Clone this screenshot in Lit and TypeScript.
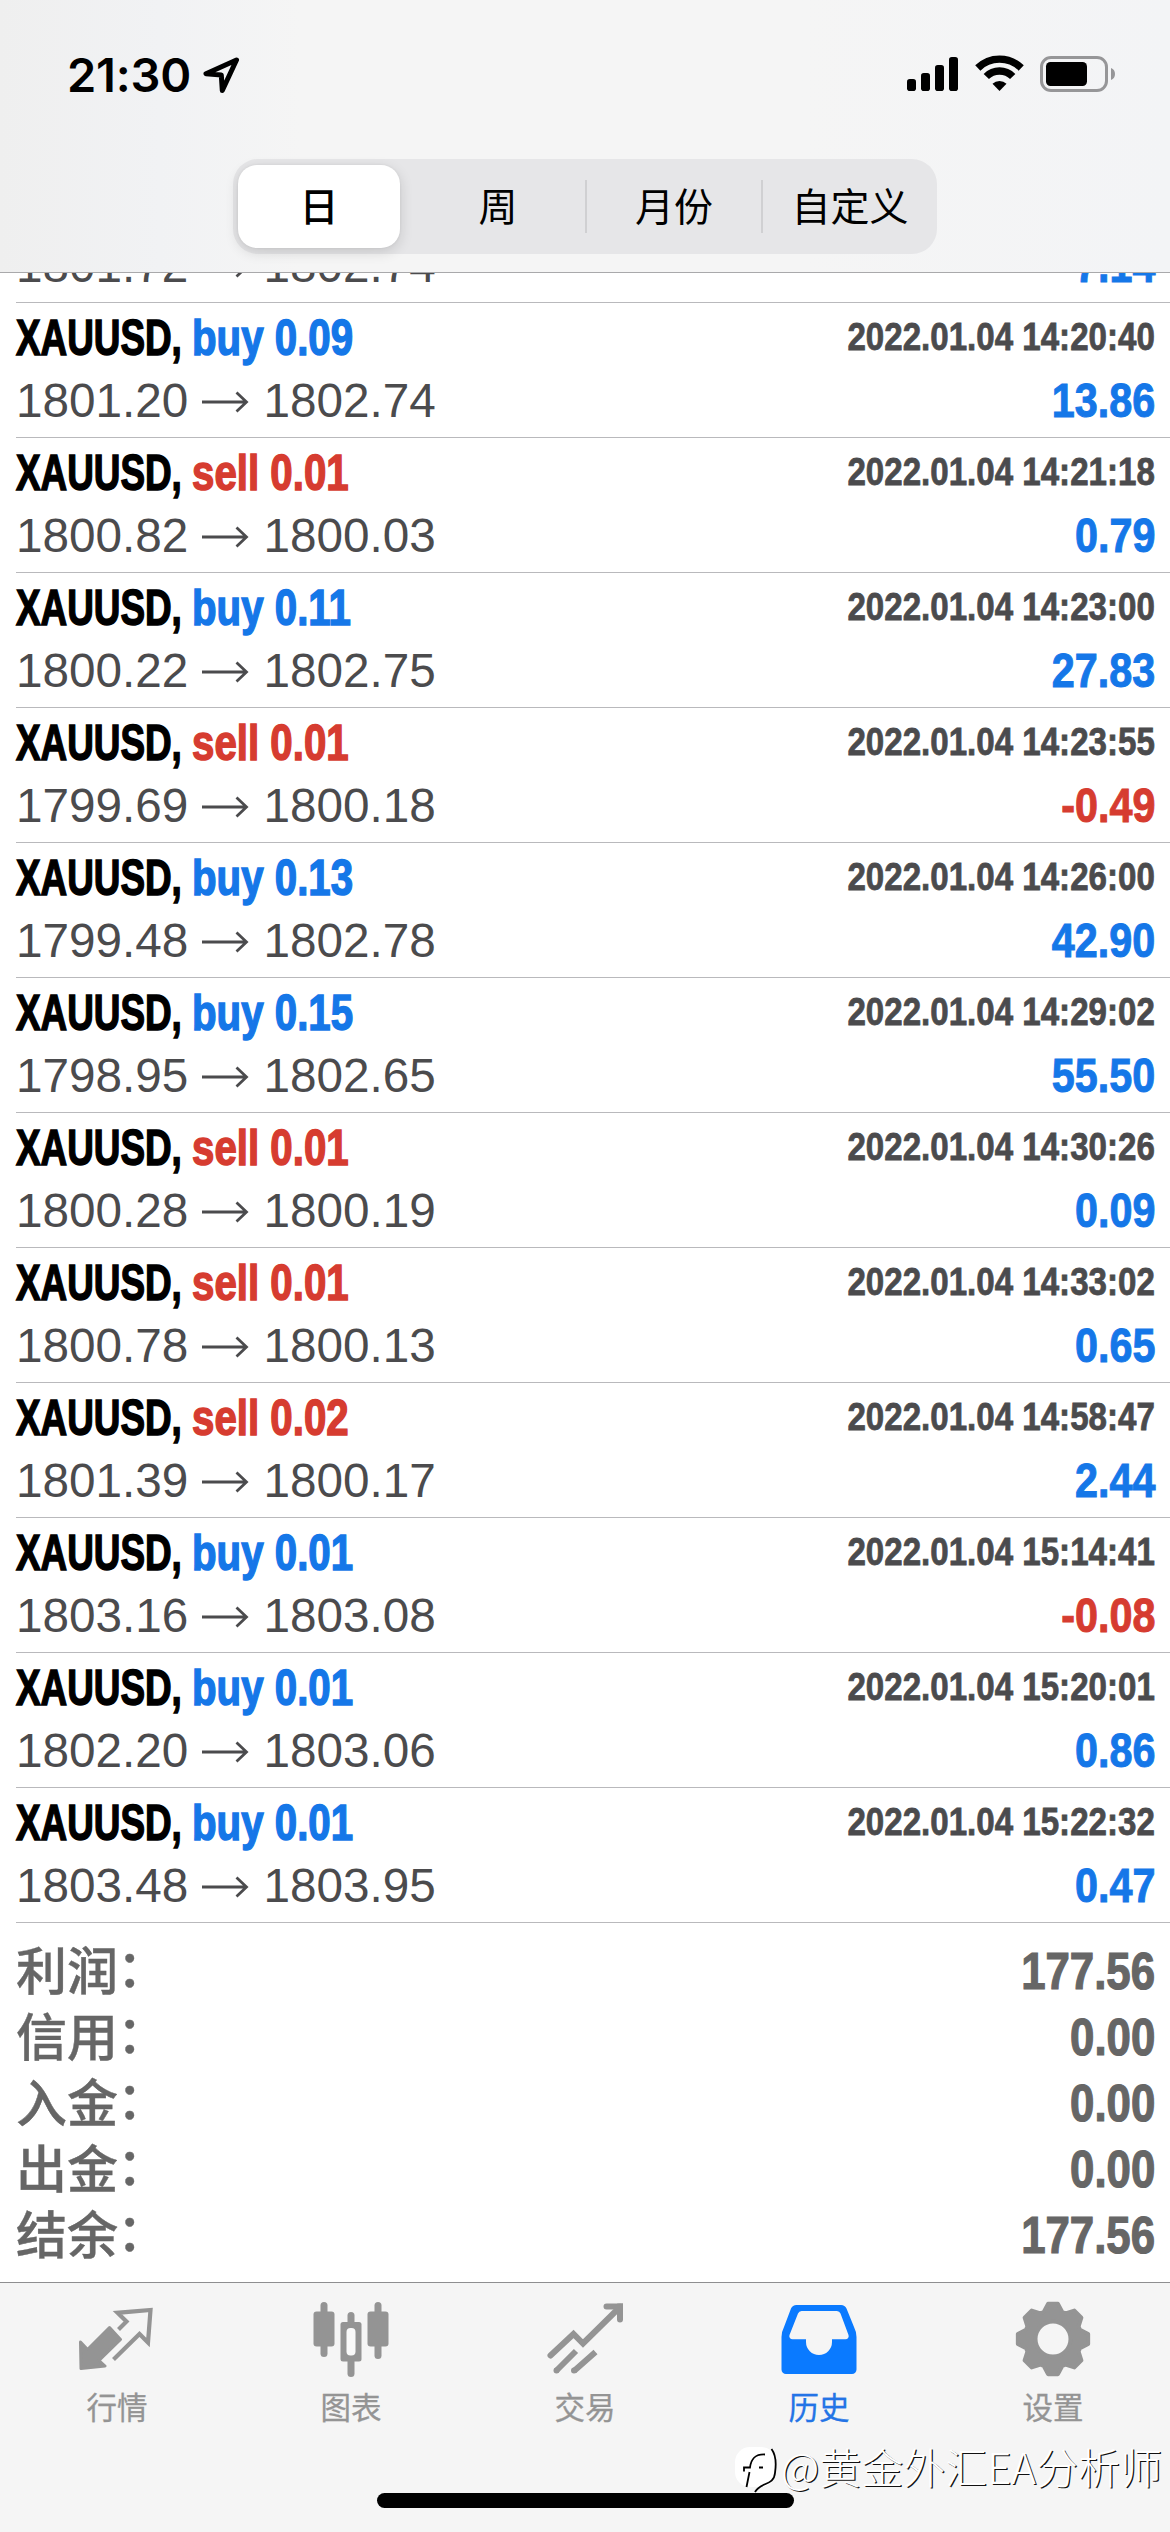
import { LitElement, html, svg, css, nothing } from "lit";
import { customElement } from "lit/decorators.js";
import { classMap } from "lit/directives/class-map.js";

type Side = "buy" | "sell";

interface Deal {
  side?: Side;
  volume?: string;
  open: string;
  close: string;
  time?: string;
  profit: string;
}

const deal = (side: Side, volume: string, open: string, close: string, time: string, profit: string): Deal => ({
  side, volume, open, close, time: `2022.01.04 ${time}`, profit,
});

// The first entry is scrolled half under the header, so only its price line is visible.
const DEALS: Deal[] = [
  { open: "1801.72", close: "1802.74", profit: "7.14" },
  deal("buy", "0.09", "1801.20", "1802.74", "14:20:40", "13.86"),
  deal("sell", "0.01", "1800.82", "1800.03", "14:21:18", "0.79"),
  deal("buy", "0.11", "1800.22", "1802.75", "14:23:00", "27.83"),
  deal("sell", "0.01", "1799.69", "1800.18", "14:23:55", "-0.49"),
  deal("buy", "0.13", "1799.48", "1802.78", "14:26:00", "42.90"),
  deal("buy", "0.15", "1798.95", "1802.65", "14:29:02", "55.50"),
  deal("sell", "0.01", "1800.28", "1800.19", "14:30:26", "0.09"),
  deal("sell", "0.01", "1800.78", "1800.13", "14:33:02", "0.65"),
  deal("sell", "0.02", "1801.39", "1800.17", "14:58:47", "2.44"),
  deal("buy", "0.01", "1803.16", "1803.08", "15:14:41", "-0.08"),
  deal("buy", "0.01", "1802.20", "1803.06", "15:20:01", "0.86"),
  deal("buy", "0.01", "1803.48", "1803.95", "15:22:32", "0.47"),
];

const TOTALS: [string, string][] = [
  ["利润", "177.56"],
  ["信用", "0.00"],
  ["入金", "0.00"],
  ["出金", "0.00"],
  ["结余", "177.56"],
];

const gearPath = (): string => {
  const pts: string[] = [];
  for (let i = 0; i < 8; i++) {
    const a = (i * Math.PI) / 4 - Math.PI / 2;
    for (const [r, d] of [[28.5, -0.33], [35.5, -0.14], [35.5, 0.14], [28.5, 0.33]]) {
      pts.push(`${(38 + r * Math.cos(a + d)).toFixed(2)} ${(38 + r * Math.sin(a + d)).toFixed(2)}`);
    }
  }
  return `M${pts.join("L")}Z M38 20.5a17.5 17.5 0 1 0 0 35a17.5 17.5 0 1 0 0-35Z`;
};

const ICONS = {
  quotes: svg`
    <path fill="currentColor" stroke="currentColor" stroke-width="3" stroke-linejoin="round"
      d="M1.500 41 8.500 48.500 30.500 26.500 41.500 38.500 20 59.500 26 65 2 67.500Z"/>
    <path fill="none" stroke="currentColor" stroke-width="4.200" d="M39.500 28.500 47.500 20.500 38.500 11.800 71.500 9 69 41.500 60.500 33 34.500 58.500"/>`,
  chart: svg`
    <g fill="currentColor">
      <rect x="7.500" y="1" width="7" height="55" rx="3.500"/><rect x="0.500" y="10.500" width="21" height="35" rx="3"/>
      <rect x="61.500" y="1" width="7" height="57" rx="3.500"/><rect x="54.500" y="10.500" width="21" height="35" rx="3"/>
      <rect x="34.500" y="11" width="7" height="65" rx="3.500"/>
      <rect x="27.500" y="21" width="21" height="39.500" rx="2.500"/>
    </g>
    <rect x="33.500" y="27" width="9" height="27.500" rx="4" fill="#f9f9f9"/>`,
  trade: svg`
    <g fill="none" stroke="currentColor" stroke-width="6" stroke-linejoin="miter">
      <path stroke-linecap="round" d="M3.500 54.500 26.500 33 36 42.500 73 6"/>
      <path stroke-linecap="round" d="M59.500 5.500H73V18.500"/>
      <path d="M29 50 9 70M48.500 51 27 70"/>
    </g>
    <path fill="currentColor" d="M70 2.500h6v6z"/>
    <circle cx="9.500" cy="69.500" r="3" fill="currentColor"/><circle cx="27" cy="69.500" r="3" fill="currentColor"/>`,
  history: svg`
    <path fill="currentColor" fill-rule="evenodd" transform="translate(0,-1)" d="M15.500 5H60a6 6 0 0 1 5.500 3.500L73 27a22 22 0 0 1 2.500 10V69.500a4.500 4.500 0 0 1-4.500 4.500H5a4.500 4.500 0 0 1-4.500-4.500V37A22 22 0 0 1 3 27L10 8.500A6 6 0 0 1 15.500 5Z
      M21 11a4 4 0 0 0-4 2.500L8.500 35a3.200 3.200 0 0 0 3 4.300H25V42a13 13 0 0 0 26 0V39.300H64.500a3.200 3.200 0 0 0 3-4.300L59.500 13.500a4 4 0 0 0-4-2.500Z"/>`,
  settings: svg`
    <path fill="currentColor" fill-rule="evenodd" stroke="currentColor" stroke-width="4" stroke-linejoin="round" d=${gearPath()}/>`,
};

const TABS: { id: keyof typeof ICONS; label: string }[] = [
  { id: "quotes", label: "行情" },
  { id: "chart", label: "图表" },
  { id: "trade", label: "交易" },
  { id: "history", label: "历史" },
  { id: "settings", label: "设置" },
];

@customElement("status-bar")
class StatusBar extends LitElement {
  static styles = css`
    :host { display: flex; justify-content: space-between; align-items: flex-start; height: 159px; padding: 0 54px 0 67px; box-sizing: border-box; color: #000; }
    .left { display: flex; padding-top: 46px; }
    .clock { width: 136px; font: 600 47px/57px Inter, "Liberation Sans", sans-serif; white-space: nowrap; letter-spacing: -0.2px; }
    .loc { margin-top: 10px; }
    .right { display: flex; padding-top: 54px; }
    .wifi { margin-left: 16px; }
    .battery { margin-left: 16px; }
    svg { display: block; }
  `;
  render() {
    return html`
      <div class="left">
        <span class="clock">21:30</span>
        <svg class="loc" width="37" height="38" viewBox="0 0 37 38" fill="none" stroke="#000" stroke-width="5" stroke-linejoin="round">
          <path d="M33.500 4 3 17.800 18.300 19 19.300 34.500Z"/>
        </svg>
      </div>
      <div class="right">
        <svg width="52" height="38" viewBox="0 0 52 38">
          <rect x="0" y="25" width="9" height="12" rx="2.800"/><rect x="14" y="19" width="9" height="18" rx="2.800"/>
          <rect x="28" y="11" width="9" height="26" rx="2.800"/><rect x="42" y="3" width="9" height="34" rx="2.800"/>
        </svg>
        <svg class="wifi" width="49" height="38" viewBox="0 0 49 38">
          <g fill="none" stroke="#000" stroke-width="7.400">
            <path d="M2.800 14A31 31 0 0 1 46.200 14"/><path d="M11.300 22.500A18.500 18.500 0 0 1 37.700 22.500"/>
          </g>
          <path d="M24.500 37 17.500 29.800A10 10 0 0 1 31.500 29.800Z"/>
        </svg>
        <svg class="battery" width="76" height="40" viewBox="0 0 76 40">
          <rect x="1.500" y="3.500" width="65" height="33" rx="9.500" fill="none" stroke="#969698" stroke-width="3"/>
          <rect x="6" y="8" width="41" height="24" rx="4.500"/>
          <path d="M71 14a6.500 6.500 0 0 1 0 12Z" fill="#969698"/>
        </svg>
      </div>`;
  }
}

@customElement("period-switch")
class PeriodSwitch extends LitElement {
  static styles = css`
    :host { display: grid; grid-template-columns: repeat(4, 176px); width: 704px; height: 95px; border-radius: 25px; background: #e6e6e8; }
    .seg { display: flex; align-items: center; justify-content: center; font: 400 39px/54px "Noto Sans CJK SC", sans-serif; color: #000; margin: 21px 0; border-left: 2px solid transparent; white-space: nowrap; }
    .seg span { margin-top: -6px; }
    .line { border-left-color: #d0d0d2; }
    .on { margin: 6px 9px 6px 5px; border: 0; border-radius: 19px; background: #fff; box-shadow: 0 4px 14px rgba(0, 0, 0, .14), 0 0 3px rgba(0, 0, 0, .06); font-weight: 500; }
  `;
  render() {
    return html`${["日", "周", "月份", "自定义"].map(
      (t, i) => html`<div class=${classMap({ seg: true, on: i === 0, line: i > 1 })}><span>${t}</span></div>`
    )}`;
  }
}

@customElement("deal-row")
class DealRow extends LitElement {
  static properties = { deal: { attribute: false } };
  declare deal: Deal;
  static styles = css`
    :host { display: block; height: 134px; margin-left: 16px; padding-right: 15px; border-bottom: 1px solid #b9b9bc; font-family: "Liberation Sans", Arial, sans-serif; white-space: nowrap; }
    .top { display: flex; height: 70px; padding-top: 5px; box-sizing: border-box; }
    .symbol, .action { font-weight: 700; font-size: 50px; line-height: 60px; transform-origin: 0 50%; -webkit-text-stroke: 1.500px currentColor; }
    .symbol { width: 176px; transform: scaleX(.737); color: #000; }
    .action { transform: scaleX(.805); }
    .time { margin-left: auto; font-weight: 700; font-size: 39.500px; line-height: 56px; color: #4b4b4d; transform: scaleX(.838); transform-origin: 100% 50%; -webkit-text-stroke: .8px currentColor; }
    .bottom { display: flex; justify-content: space-between; height: 64px; line-height: 55px; }
    .prices { display: flex; align-items: center; height: 55px; font-size: 47.700px; color: #4b4b4d; }
    .arrow { margin: 2px 13.500px 0; display: block; }
    .profit { font-weight: 700; font-size: 48px; transform: scaleX(.86); transform-origin: 100% 50%; -webkit-text-stroke: 1px currentColor; }
    .blue { color: #1577e8; }
    .red { color: #d63c30; }
  `;
  render() {
    const d = this.deal;
    const loss = d.profit.startsWith("-");
    return html`
      <div class="top">
        ${d.side
          ? html`<span class="symbol">XAUUSD,</span>
              <span class=${classMap({ action: true, blue: d.side === "buy", red: d.side === "sell" })}>${d.side} ${d.volume}</span>
              <span class="time">${d.time}</span>`
          : nothing}
      </div>
      <div class="bottom">
        <div class="prices">
          <span>${d.open}</span>
          <svg class="arrow" width="48" height="22" viewBox="0 0 48 22" fill="none" stroke="currentColor" stroke-width="2.800">
            <path d="M0 11H44M34.500 1.500 44.500 11 34.500 20.500"/>
          </svg>
          <span>${d.close}</span>
        </div>
        <span class=${classMap({ profit: true, blue: !loss, red: loss })}>${d.profit}</span>
      </div>`;
  }
}

@customElement("totals-list")
class TotalsList extends LitElement {
  static styles = css`
    :host { display: block; padding: 15px 15px 14px 16px; color: #666; white-space: nowrap; }
    .row { display: flex; justify-content: space-between; height: 66px; }
    .label { display: flex; font: 500 51px/60px "Noto Sans CJK SC", sans-serif; -webkit-text-stroke: .4px currentColor; }
    .colon { transform: translate(-1px, -3px); }
    .value { font: 700 51px/68px "Liberation Sans", Arial, sans-serif; transform: scaleX(.858); transform-origin: 100% 50%; -webkit-text-stroke: 1.200px currentColor; }
  `;
  render() {
    return html`${TOTALS.map(
      ([k, v]) => html`<div class="row">
        <div class="label"><span>${k}</span><span class="colon">：</span></div>
        <span class="value">${v}</span>
      </div>`
    )}`;
  }
}

@customElement("tab-bar")
class TabBar extends LitElement {
  static styles = css`
    :host { display: block; height: 250px; box-sizing: border-box; border-top: 1px solid #8e8e90; background: #f5f5f5; }
    .tabs { display: grid; grid-template-columns: repeat(5, 1fr); height: 210px; }
    .tab { display: flex; flex-direction: column; align-items: center; padding-top: 18px; color: #949494; }
    .tab svg { display: block; }
    .tab span { font: 400 30.500px/44px "Noto Sans CJK SC", sans-serif; margin-top: 6px; -webkit-text-stroke: .3px currentColor; }
    .on { color: #0a7aff; }
    .on span { color: #2474e6; }
    .home { width: 417px; height: 15px; border-radius: 8px; background: #000; margin: 0 auto; }
  `;
  render() {
    return html`
      <div class="tabs">
        ${TABS.map((t) => html`<div class=${classMap({ tab: true, on: t.id === "history" })}>
          <svg width="76" height="77" viewBox="0 0 76 77">${ICONS[t.id]}</svg><span>${t.label}</span>
        </div>`)}
      </div>
      <div class="home"></div>`;
  }
}

@customElement("app-root")
class AppRoot extends LitElement {
  static styles = css`
    :host { display: flex; flex-direction: column; position: relative; width: 1170px; height: 2532px; overflow: hidden; background: #fff; }
    .head { flex: none; height: 273px; box-sizing: border-box; border-bottom: 1px solid #a9a9ab; background: linear-gradient(90deg, #efefef 0, #f1f2f4 160px, #f5f5f5 300px, #f5f5f5 800px, #f3f4f6 100%); }
    period-switch { margin: 0 auto; }
    .list { flex: none; height: 1650px; display: flex; flex-direction: column; justify-content: flex-end; overflow: hidden; }
    .list deal-row { flex: none; }
    totals-list { flex: none; }
    tab-bar { flex: none; margin-top: auto; }
    .mark { position: absolute; left: 734px; bottom: 36px; display: flex; align-items: flex-start; font: 300 42px/58px "Noto Sans CJK SC", sans-serif; color: #fff; text-shadow: 1.300px 1px 0 #111; white-space: nowrap; }
    .mark svg { display: block; margin-top: 9px; }
  `;
  render() {
    return html`
      <div class="head"><status-bar></status-bar><period-switch></period-switch></div>
      <div class="list">${DEALS.map((d) => html`<deal-row .deal=${d}></deal-row>`)}</div>
      <totals-list></totals-list>
      <tab-bar></tab-bar>
      <div class="mark">
        <svg width="47" height="50" viewBox="0 0 47 50">
          <rect x="1" y="1" width="41" height="40" rx="15" fill="#fff"/>
          <g fill="none" stroke="#000" stroke-width="1.800">
            <path d="M37.500 3C42 9 42.500 17 41 27C40 40 26 36 21 46"/>
            <path d="M12.500 41 15.500 26M10 25.500V21.500H16C17 14 20 8 31 8.500M25 21.500H29"/>
          </g>
        </svg>
        <span>@黄金外汇EA分析师</span>
      </div>`;
  }
}
